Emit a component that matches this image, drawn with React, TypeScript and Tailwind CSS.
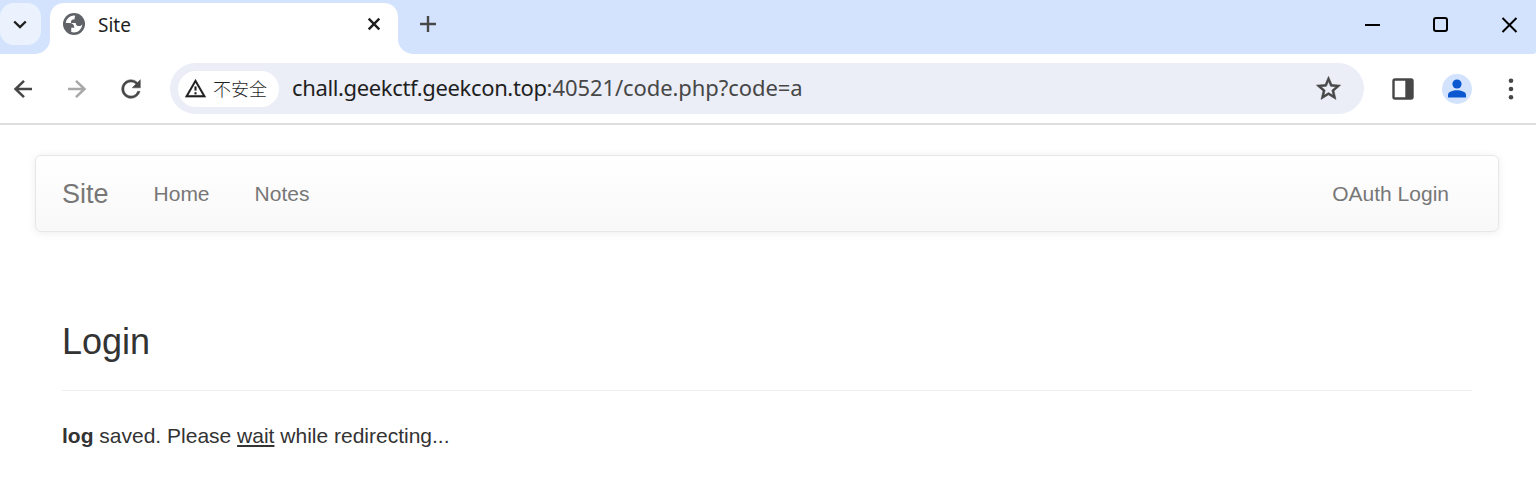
import type { ReactNode } from "react";

function Stroke({ size, width, color, children }: { size: number; width: number; color: string; children: ReactNode }) {
  return (
    <svg width={size} height={size} viewBox={`0 0 ${size} ${size}`} fill="none" stroke={color} strokeWidth={width} className="block shrink-0">
      {children}
    </svg>
  );
}

function Material({ d, size, color, weight = 0 }: { d: string; size: number; color: string; weight?: number }) {
  return (
    <svg width={size} height={size} viewBox="0 0 24 24" fill={color} stroke={color} strokeWidth={weight} className="block shrink-0">
      <path d={d} />
    </svg>
  );
}

function Globe() {
  return (
    <svg width="22" height="22" viewBox="0 0 64 64" className="block shrink-0">
      <circle cx="32" cy="32" r="32" fill="#5f6368" />
      <path
        fill="#fff"
        d="M36 8A24 24 0 0 0 8 29h10c10 0 15 5 15 14h-9v12A24 24 0 0 0 56 33c-2 4-5 5-9 5-7 0-10-3-10-9H23c0-8 3-11 11-11-1-4 0-7 2-10z"
      />
    </svg>
  );
}

function TabStrip() {
  return (
    <div className="flex h-[54px] bg-white">
      <div className="w-[50px] rounded-br-[15px] bg-[#d3e3fd] pt-[3px]">
        <button className="flex h-[42px] w-[41px] items-center justify-center rounded-[14px] bg-[#ebf2fe] pr-[2px]">
          <Stroke size={14} width={2.4} color="#1f1f1f">
            <path d="M1.2 4.5 7 10l5.8-5.5" />
          </Stroke>
        </button>
      </div>
      <div className="w-[348px] bg-[#d3e3fd] pt-[3px]">
        <div className="flex h-[51px] items-start rounded-t-[14px] bg-white pt-2 pl-[13px]">
          <span className="mt-[2px]">
            <Globe />
          </span>
          <span className="ml-[13px] w-[269px] text-[19px] leading-[28px] text-[#1f1f1f]">Site</span>
          <button className="mt-[6px]">
            <Stroke size={14} width={2.4} color="#1f1f1f">
              <path d="M1.7 1.7l10.6 10.6m0-10.6L1.7 12.3" />
            </Stroke>
          </button>
        </div>
      </div>
      <div className="flex flex-1 items-start rounded-br-[3px] rounded-bl-[15px] bg-[#d3e3fd] pt-4 pl-[22px]">
        <Stroke size={16} width={2.4} color="#474747">
          <path d="M8 0v16M0 8h16" />
        </Stroke>
        <div className="ml-auto flex gap-[52px] pr-[18px]">
          <Stroke size={15} width={2} color="#000">
            <path d="M0 9h15" />
          </Stroke>
          <Stroke size={17} width={2} color="#000">
            <rect x="2" y="2" width="13" height="13" rx="2" />
          </Stroke>
          <Stroke size={17} width={2} color="#000">
            <path d="M1.5 2l14 14M15.5 2l-14 14" />
          </Stroke>
        </div>
      </div>
    </div>
  );
}

function Toolbar() {
  return (
    <div className="flex h-[71px] items-center border-b-2 border-[#dfdfdf] bg-white">
      <div className="flex w-[170px] items-center pl-[13px]">
        <Stroke size={20} width={2.5} color="#474747">
          <path d="M19 10H2.5M11 1.8 2.5 10l8.5 8.2" />
        </Stroke>
        <span className="ml-[34px]">
          <Stroke size={20} width={2.5} color="#a8a8a8">
            <path d="M1 10h16.5M9 1.8l8.5 8.2L9 18.2" />
          </Stroke>
        </span>
        <span className="ml-[30px]">
          <Material size={28} weight={0.4} color="#474747" d="M17.65 6.35A7.958 7.958 0 0 0 12 4c-4.42 0-7.99 3.58-7.99 8s3.57 8 7.99 8c3.73 0 6.84-2.55 7.73-6h-2.08A5.99 5.99 0 0 1 12 18c-3.31 0-6-2.69-6-6s2.69-6 6-6c1.66 0 3.14.69 4.22 1.78L13 11h7V4l-2.35 2.35z" />
        </span>
      </div>
      <div className="flex h-[51px] w-[1194px] items-center rounded-full bg-[#ebeef7] pr-[21px] pl-2">
        <div className="flex h-9 w-[101px] items-center rounded-full bg-white pl-[6px]">
          <Material size={23} weight={0.15} color="#1f1f1f" d="M12 5.99L19.53 19H4.47L12 5.99M12 2L1 21h22L12 2zm1 14h-2v2h2v-2zm0-6h-2v4h2v-4z" />
          <span className="ml-[6px] text-[18px] leading-none font-light whitespace-nowrap text-[#1f1f1f]">不安全</span>
        </div>
        <div className="ml-[13px] pb-[3px] text-[22px] leading-[30px] tracking-[-0.08px] whitespace-nowrap text-[#474747]">
          <span className="tracking-[-0.36px] text-[#1f1f1f]">chall.geekctf.geekcon.top</span>:40521/code.php?code=a
        </div>
        <span className="ml-auto">
          <Material size={29} weight={0.5} color="#474747" d="M22 9.24l-7.19-.62L12 2 9.19 8.63 2 9.24l5.46 4.73L5.82 21 12 17.27 18.18 21l-1.63-7.03L22 9.24zM12 15.4l-3.76 2.27 1-4.28-3.32-2.88 4.38-.38L12 6.1l1.71 4.04 4.38.38-3.32 2.88 1 4.28L12 15.4z" />
        </span>
      </div>
      <svg width="22" height="22" viewBox="0 0 22 22" className="ml-7 block">
        <rect x="1.5" y="1.5" width="19" height="19" rx="1.5" fill="none" stroke="#474747" strokeWidth="2.4" />
        <path d="M13.3 1H21v20h-7.7z" fill="#474747" />
      </svg>
      <div className="ml-7 flex size-[30px] items-center justify-center rounded-full bg-[#d3e3fd]">
        <svg width="18" height="19" viewBox="0 0 18 19" fill="#0b57d0" className="block">
          <circle cx="9" cy="5" r="4.6" />
          <path d="M0 18.5v-2.7c0-3 5-4.6 9-4.6s9 1.6 9 4.6v2.7z" />
        </svg>
      </div>
      <svg width="6" height="22" viewBox="0 0 6 22" fill="#474747" className="ml-9 block">
        <circle cx="3" cy="2.7" r="2.3" />
        <circle cx="3" cy="11" r="2.3" />
        <circle cx="3" cy="19.3" r="2.3" />
      </svg>
    </div>
  );
}

export default function App() {
  return (
    <div className="h-[477px] overflow-hidden bg-white">
      <header className="font-['Noto_Sans','Noto_Sans_CJK_SC',sans-serif]">
        <TabStrip />
        <Toolbar />
      </header>
      <main className="px-[35px] pt-[30px] font-['Liberation_Sans',Arial,sans-serif] text-[21px] leading-[30px] text-[#333333]">
        <nav className="flex h-[77px] w-[1464px] items-center rounded-[6px] border border-[#e7e7e7] bg-linear-to-b from-white to-[#f8f8f8] px-[26px] text-[#777777] shadow-[0_1px_8px_rgba(0,0,0,0.075)]">
          <a className="text-[27px]">Site</a>
          <a className="ml-[45px]">Home</a>
          <a className="ml-[45px]">Notes</a>
          <a className="mr-[23px] ml-auto">OAuth Login</a>
        </nav>
        <section className="px-[27px] pt-[90px]">
          <h3 className="text-[36px] leading-10">Login</h3>
          <hr className="mt-7 mb-[30px] w-[1410px] border-[#eeeeee]" />
          <p>
            <b>log</b> saved. Please <u className="underline">wait</u> while redirecting...
          </p>
        </section>
      </main>
    </div>
  );
}
